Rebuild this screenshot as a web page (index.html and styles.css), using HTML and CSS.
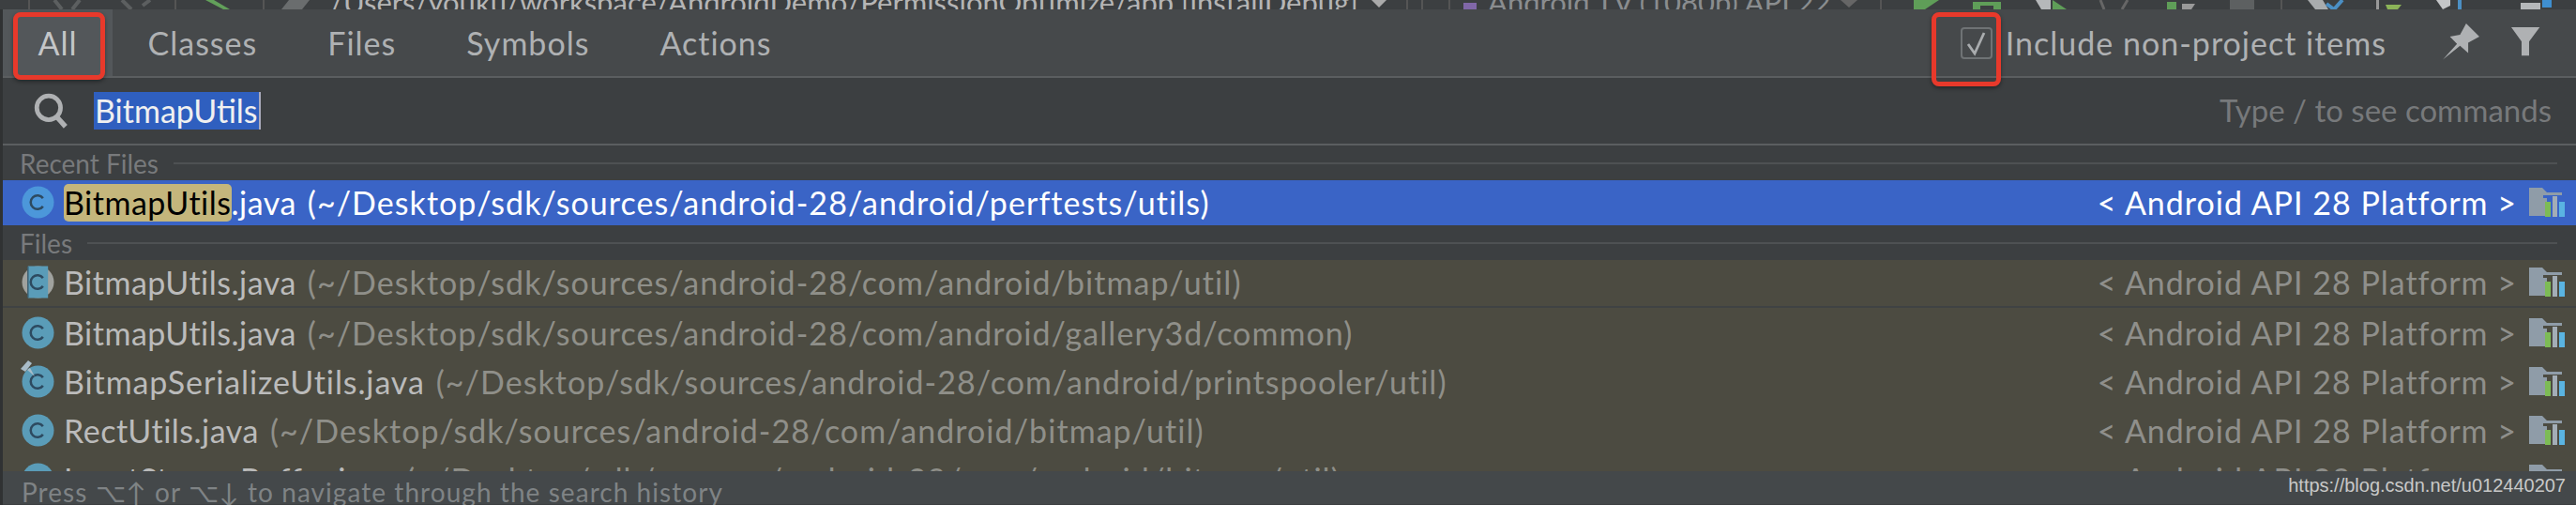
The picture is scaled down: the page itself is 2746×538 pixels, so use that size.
FILE: index.html
```html
<!DOCTYPE html>
<html lang="en">
<head>
  <meta charset="UTF-8" />
  <title>Search Everywhere</title>
  <link rel="stylesheet" href="styles.css">
</head>
<body>
  <svg class="defs" width="0" height="0">
    <symbol id="cls" viewBox="0 0 36 36">
      <circle cx="18" cy="18" r="17.5" fill="currentColor"/>
      <path d="M23.5 13.5a7.5 7.5 0 1 0 0 9" fill="none" stroke="#2d4a60" stroke-width="2.6"/>
    </symbol>
    <symbol id="cls-split" viewBox="0 0 36 36">
      <circle cx="18" cy="18" r="17.5" fill="#a0a29e"/>
      <path d="M7 0.5H29V35.5H7Z" fill="#5a9cb8"/>
      <path d="M7 1V35" stroke="#3d5f70" stroke-width="1.5"/>
      <path d="M23.5 13.5a7.5 7.5 0 1 0 0 9" fill="none" stroke="#2d4a60" stroke-width="2.6"/>
    </symbol>
    <symbol id="lib" viewBox="0 0 39 31">
      <path d="M0 0H14L19 5H35V8H15V30H0Z" fill="#8f9ca8"/>
      <path d="M15 11H19V30H15Z" fill="#8f9ca8"/>
      <path d="M17 15H23V31H17Z" fill="#7dbb55"/>
      <path d="M25 9H30V31H25Z" fill="#a3adb6"/>
      <path d="M32 15H38V31H32Z" fill="#5ab4e2"/>
    </symbol>
  </svg>

  <div class="toolbar">
    <svg class="tool-left" width="352" height="10" viewBox="0 0 352 10">
      <path d="M31 0V10M187 0V10M281 0V10" stroke="#555" stroke-width="2"/>
      <path d="M58 0L66 10M85 0L77 10M130 0L140 10M160 0L152 6" stroke="#5c5f60" stroke-width="4" fill="none"/>
      <path d="M219 0L238 10H245L228 0Z" fill="#62a05a"/>
      <path d="M300 10L308 0H330L322 10Z" fill="#6a6d6e"/>
    </svg>
    <span class="run-config">/Users/youku/workspace/AndroidDemo/PermissionOptimize/app [installDebug]</span>
    <svg class="tool-mid" width="146" height="10" viewBox="0 0 146 10">
      <path d="M22 0H38L30 8Z" fill="#aaa"/>
      <path d="M60 0V10M76 0V10M105 0V10" stroke="#555" stroke-width="2"/>
      <path d="M120 3H134V10H120Z" fill="#8067a8"/>
    </svg>
    <span class="device">Android TV (1080p) API 22</span>
    <svg class="tool-right" width="786" height="10" viewBox="1960 0 786 10">
      <path d="M1962 0H1980L1971 8Z" fill="#666"/>
      <path d="M2005 0V10M2432 0V10" stroke="#555" stroke-width="2"/>
      <path d="M2040 0H2067L2052 10H2040Z" fill="#5f9e58"/>
      <path d="M2103 2H2133V10H2125V6H2111V10H2103Z" fill="#5f9e58"/>
      <path d="M2170 0H2186V10H2176Z" fill="#b5b8ba"/>
      <path d="M2188 0L2203 10H2188Z" fill="#5f9e58"/>
      <path d="M2239 0L2243 10M2268 0L2262 10" stroke="#666" stroke-width="3"/>
      <path d="M2310 2H2320V10H2310Z" fill="#5f9e58"/>
      <path d="M2326 4H2340L2336 10H2326Z" fill="#999"/>
      <path d="M2377 0H2403V10H2377Z" fill="#5d6061"/>
      <path d="M2460 0H2476L2482 10H2468Z" fill="#a9acae"/>
      <path d="M2480 4L2488 10M2497 0L2488 10" stroke="#4b8fc4" stroke-width="4"/>
      <path d="M2533 0H2536V10H2533Z" fill="#999"/>
      <path d="M2543 5H2560L2556 10H2545Z" fill="#8cb458"/>
      <path d="M2597 0H2612V6L2604 10Z" fill="#c4c6c8"/>
      <path d="M2620 0H2624V10H2620Z" fill="#4b8fc4"/>
      <path d="M2687 3H2708V10H2687Z" fill="#b5b8ba"/>
      <path d="M2710 0H2720V8H2710Z" fill="#3f8fd0"/>
    </svg>
  </div>

  <div class="popup">
    <div class="tabs">
      <div class="tab selected">All</div>
      <div class="tab">Classes</div>
      <div class="tab">Files</div>
      <div class="tab">Symbols</div>
      <div class="tab">Actions</div>
      <div class="tab-options">
        <span class="checkbox">
          <svg width="34" height="34" viewBox="0 0 34 34"><path d="M8 18L15 28L25 6" fill="none" stroke="#a9acae" stroke-width="2.8"/></svg>
        </span>
        <span class="include">Include non-project items</span>
        <svg class="pin" width="39" height="39" viewBox="46 18 36 36"><path d="M46 53.5L60 38L53 31L63 29L69 18L82 31L71 37L71 47L63 40Z" fill="#afb1b3"/></svg>
        <svg class="filter" width="31" height="31" viewBox="116.7 20.7 31 31"><path d="M116.7 20.7H147L135.7 36V51H127.7V36Z" fill="#afb1b3"/></svg>
      </div>
    </div>

    <div class="search">
      <svg class="search-icon" width="38" height="38" viewBox="0 0 36 36">
        <circle cx="16" cy="15" r="12" fill="none" stroke="#afb1b3" stroke-width="4.5"/>
        <path d="M24 24L33 34" stroke="#afb1b3" stroke-width="5"/>
      </svg>
      <span class="query">BitmapUtils</span>
      <span class="hint">Type / to see commands</span>
    </div>

    <div class="group"><span>Recent Files</span><i></i></div>
    <div class="row current">
      <svg class="cls-icon"><use href="#cls"/></svg>
      <span class="name"><mark>BitmapUtils</mark>.java</span>
      <span class="path">(~/Desktop/sdk/sources/android-28/android/perftests/utils)</span>
      <span class="where">&lt; Android API 28 Platform &gt;</span>
      <svg class="lib-icon"><use href="#lib"/></svg>
    </div>

    <div class="group"><span>Files</span><i></i></div>
    <div class="list">
      <div class="row hit first">
        <svg class="cls-icon"><use href="#cls-split"/></svg>
        <span class="name">BitmapUtils.java</span>
        <span class="path">(~/Desktop/sdk/sources/android-28/com/android/bitmap/util)</span>
        <span class="where">&lt; Android API 28 Platform &gt;</span>
        <svg class="lib-icon"><use href="#lib"/></svg>
      </div>
      <div class="row hit">
        <svg class="cls-icon"><use href="#cls"/></svg>
        <span class="name">BitmapUtils.java</span>
        <span class="path">(~/Desktop/sdk/sources/android-28/com/android/gallery3d/common)</span>
        <span class="where">&lt; Android API 28 Platform &gt;</span>
        <svg class="lib-icon"><use href="#lib"/></svg>
      </div>
      <div class="row hit">
        <span class="icon-wrap">
          <svg class="cls-icon"><use href="#cls"/></svg>
          <svg class="pin-mark" width="22" height="22" viewBox="0 0 22 22"><path d="M2 11L10 2L14 5L7 14Z" fill="#a9bcc8"/><path d="M9 12L17 19L12 10Z" fill="#a9bcc8"/></svg>
        </span>
        <span class="name wide">BitmapSerializeUtils.java</span>
        <span class="path">(~/Desktop/sdk/sources/android-28/com/android/printspooler/util)</span>
        <span class="where">&lt; Android API 28 Platform &gt;</span>
        <svg class="lib-icon"><use href="#lib"/></svg>
      </div>
      <div class="row hit">
        <svg class="cls-icon"><use href="#cls"/></svg>
        <span class="name">RectUtils.java</span>
        <span class="path">(~/Desktop/sdk/sources/android-28/com/android/bitmap/util)</span>
        <span class="where">&lt; Android API 28 Platform &gt;</span>
        <svg class="lib-icon"><use href="#lib"/></svg>
      </div>
      <div class="row hit">
        <svg class="cls-icon"><use href="#cls"/></svg>
        <span class="name">InputStreamBuffer.java</span>
        <span class="path">(~/Desktop/sdk/sources/android-28/com/android/bitmap/util)</span>
        <span class="where">&lt; Android API 28 Platform &gt;</span>
        <svg class="lib-icon"><use href="#lib"/></svg>
      </div>
    </div>

    <div class="footer">
      <span class="history">Press ⌥↑ or ⌥↓ to navigate through the search history</span>
      <span class="watermark">https://blog.csdn.net/u012440207</span>
    </div>

    <div class="callout callout-all"></div>
    <div class="callout callout-check"></div>
  </div>
</body>
</html>
```

FILE: styles.css
```css
html, body {
  margin: 0;
  height: 538px;
  overflow: hidden;
  background: #3c3f41;
}

body {
  font-family: Lato, "Noto Sans", sans-serif;
  font-size: 34px;
  color: #bbbbbb;
}

.defs {
  position: absolute;
}

.toolbar {
  display: flex;
  align-items: flex-end;
  height: 10px;
  overflow: hidden;
  background: #3c3f41;
}

.toolbar svg {
  flex: none;
}

.run-config, .device {
  flex: none;
  font-size: 31px;
  line-height: 34px;
  margin-bottom: -9px;
  color: #b5b5b5;
  white-space: nowrap;
}

.run-config {
  width: 1088px;
}

.device {
  width: 374px;
  color: #8a8d8f;
}

.popup {
  position: relative;
  height: 528px;
  border-left: 3px solid #303233;
  background: #3c3f41;
  overflow: hidden;
}

.tabs {
  display: flex;
  align-items: stretch;
  height: 71px;
  background: #46494b;
  border-bottom: 2px solid #5b5e60;
}

.tab {
  display: flex;
  align-items: center;
  padding: 0 37.5px;
  letter-spacing: 1px;
  color: #afb1b3;
}

.tab.selected {
  background: #53575a;
  color: #c4c6c8;
}

.tab-options {
  display: flex;
  align-items: center;
  margin-left: auto;
  padding-right: 38px;
}

.checkbox {
  box-sizing: border-box;
  width: 34px;
  height: 34px;
  border: 2px solid #6f7375;
  border-radius: 4px;
}

.checkbox svg {
  display: block;
  margin: -2px;
}

.include {
  margin-left: 14px;
  letter-spacing: 1px;
  color: #afb1b3;
}

.pin {
  margin-left: 60px;
  margin-top: -2px;
}

.filter {
  margin-left: 34px;
  margin-top: -2px;
}

.search {
  display: flex;
  align-items: center;
  height: 70px;
  padding: 0 26px 0 32px;
  border-bottom: 2px solid #5b5e60;
}

.query {
  margin-left: 27px;
  padding: 0 1px;
  line-height: 40px;
  background: #2f5fbf;
  color: #f0f0f0;
  border-right: 2px solid #aab;
}

.hint {
  margin-left: auto;
  padding-bottom: 2px;
  font-size: 33px;
  color: #77797b;
}

.group {
  display: flex;
  align-items: center;
  height: 37px;
  padding: 0 20px 0 18px;
  font-size: 28px;
  color: #787a7c;
}

.group i {
  flex: 1;
  height: 2px;
  margin-left: 16px;
  background: #4e5153;
}

.row {
  display: flex;
  align-items: center;
  box-sizing: border-box;
  height: 48px;
  padding: 0 11px 2px 20px;
  white-space: nowrap;
}

.row.current {
  background: #3a64c6;
  color: #ffffff;
}

.row.current .cls-icon {
  color: #4c97da;
}

.row.hit {
  height: 52px;
  background: #4c4b41;
  color: #bbbbbb;
}

.row.hit.first {
  height: 49px;
  margin-bottom: 3px;
  box-shadow: 0 2px 0 #3f4243;
}

.cls-icon {
  flex: none;
  display: block;
  width: 35px;
  height: 35px;
  color: #5a9cb8;
}

.icon-wrap {
  position: relative;
  flex: none;
  width: 35px;
  height: 35px;
}

.pin-mark {
  position: absolute;
  left: -3px;
  top: -7px;
}

.name {
  margin-left: 10px;
  letter-spacing: 0.5px;
}

.name.wide {
  letter-spacing: 0.9px;
}

.name mark {
  display: inline-block;
  line-height: 40px;
  background: #c4b67c;
  border-radius: 5px;
  color: #000000;
}

.path {
  margin-left: 12px;
  letter-spacing: 1.05px;
  color: #8f8f89;
}

.row.current .path {
  color: #ffffff;
}

.where {
  margin-left: auto;
  letter-spacing: 1px;
  color: #8f8f8b;
}

.row.current .where {
  color: #ffffff;
}

.lib-icon {
  flex: none;
  width: 39px;
  height: 31px;
  margin-left: 13px;
}

.list {
  height: 225px;
  overflow: hidden;
  background: #4c4b41;
}

.footer {
  display: flex;
  justify-content: space-between;
  height: 35px;
  padding: 0 11px 0 20px;
  background: #44484a;
  font-size: 28px;
  line-height: 44px;
  color: #7f8385;
}

.history {
  letter-spacing: 1.05px;
}

.watermark {
  font-family: "Liberation Sans", sans-serif;
  font-size: 20px;
  line-height: 30px;
  color: #c8c8c8;
}

.callout {
  position: absolute;
  box-sizing: border-box;
  border: 5px solid #e8392b;
  border-radius: 8px;
  box-shadow: 0 2px 4px rgba(0,0,0,0.4);
}

.callout-all {
  left: 11px;
  top: 3px;
  width: 98px;
  height: 72px;
}

.callout-check {
  left: 2056px;
  top: 3px;
  width: 74px;
  height: 79px;
}
```
